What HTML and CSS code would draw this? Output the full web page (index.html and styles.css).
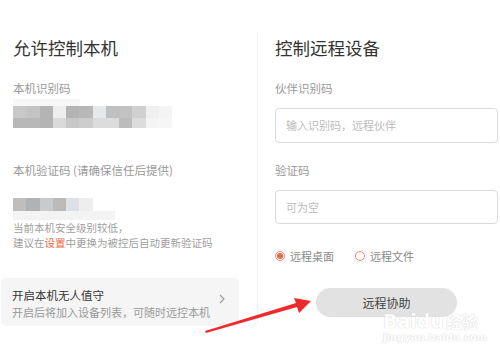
FILE: index.html
```html
<!DOCTYPE html>
<html lang="zh-CN">
<head>
  <meta charset="UTF-8" />
  <title>远程控制</title>
  <link rel="stylesheet" href="styles.css">
</head>
<body>
  <div class="page">
    <!-- 允许控制本机 -->
    <div class="col-left">
      <h1 class="title">允许控制本机</h1>
      <div class="label">本机识别码</div>
      <div class="blur blur-id">
        <div class="blur-top"></div>
        <div class="blur-row">
          <span style="background:#c8c8c8"></span><span style="background:#c4c4c4"></span><span style="background:#b4b4b4"></span><span style="background:#eeeeee"></span><span style="background:#b4b4b4"></span><span style="background:#b8b8b8"></span><span style="background:#e6e8ea"></span><span style="background:#c0c0c0"></span><span style="background:#c2c2c2"></span><span style="background:#d0d0d0"></span><span style="background:#f0f0f0"></span><span style="background:#f4f4f4"></span>
        </div>
        <div class="blur-row low">
          <span style="background:#b8b8b8"></span><span style="background:#b8b8b8"></span><span style="background:#b4b4b4"></span><span style="background:#dadada"></span><span style="background:#c8c8c8"></span><span style="background:#cccccc"></span><span style="background:#dcdcdc"></span><span style="background:#dcdcdc"></span><span style="background:#bcbcbc"></span><span style="background:#dcdcdc"></span><span style="background:#f4f4f4"></span><span style="background:#f6f6f6"></span>
        </div>
      </div>
      <div class="label label-code">本机验证码 (请确保信任后提供)</div>
      <div class="blur blur-code">
        <div class="blur-row">
          <span style="background:#c0bebc"></span><span style="background:#b0b2b4"></span><span style="background:#c8cacc"></span><span style="background:#bcbab8"></span><span style="background:#dde1e5"></span><span style="background:#eeeeee"></span>
        </div>
        <div class="blur-band"></div>
      </div>
      <p class="warn">当前本机安全级别较低，<br>建议在<span class="link">设置</span>中更换为被控后自动更新验证码</p>
      <div class="card">
        <div class="card-text">
          <div class="card-title">开启本机无人值守</div>
          <div class="card-sub">开启后将加入设备列表，可随时远控本机</div>
        </div>
        <svg class="chevron" width="6" height="10" viewBox="0 0 6 10"><polyline points="1,1 5,5 1,9" fill="none" stroke="#9a9a9a" stroke-width="1.1"/></svg>
      </div>
    </div>

    <!-- 控制远程设备 -->
    <div class="col-right">
      <h1 class="title">控制远程设备</h1>
      <div class="label">伙伴识别码</div>
      <div class="input input-id">输入识别码，远程伙伴</div>
      <div class="label label-pass">验证码</div>
      <div class="input input-code">可为空</div>
      <div class="radios">
        <label class="radio"><span class="dot checked"></span>远程桌面</label>
        <label class="radio"><span class="dot"></span>远程文件</label>
      </div>
      <button class="btn">远程协助</button>
    </div>
  </div>

  <!-- 标注箭头 -->
  <svg class="arrow" width="500" height="354" viewBox="0 0 500 354">
    <polygon points="205,331 296,303 294,298 311,301 299,313 297,307 206,333" fill="#f02a2a"/>
  </svg>

  <div class="watermark">
    <div class="wm-logo">Baidu<span class="wm-cn">经验</span></div>
    <div class="wm-url">jingyan.baidu.com</div>
  </div>
</body>
</html>
```

FILE: styles.css
```css
body {
  margin: 0;
  font-family: "Noto Sans CJK SC", "Noto Sans", sans-serif;
  background: #fff;
  color: #333;
  width: 500px;
  height: 354px;
  overflow: hidden;
  position: relative;
}
.page {
  display: flex;
  align-items: flex-start;
}
.col-left {
  width: 238px;
  margin-left: 1px;
  padding-top: 36px;
}
.col-left > .title,
.col-left > .label,
.col-left > .blur,
.col-left > .warn {
  margin-left: 12px;
}
.title {
  margin: 0;
  font-size: 17.5px;
  font-weight: 400;
  line-height: 24px;
  color: #333;
}
.label {
  margin-top: 20px;
  font-size: 11.5px;
  line-height: 16px;
  color: #999;
}
.label-code {
  margin-top: 34px;
}
.label-pass {
  margin-top: 19px;
}
.blur-id {
  margin-top: 3px;
}
.blur-top {
  width: 67px;
  height: 7px;
  background: #f7f7f7;
}
.blur-row {
  display: flex;
  height: 12px;
}
.blur-row.low {
  height: 10px;
}
.blur-row span {
  width: 13.25px;
  height: 100%;
}
.blur-code {
  margin-top: 20px;
}
.blur-code .blur-row {
  height: 13px;
}
.blur-band {
  width: 102px;
  height: 9px;
  background: #f3f3f3;
}
.warn {
  margin: 0;
  font-size: 10.5px;
  line-height: 15px;
  color: #a0a0a0;
}
.link {
  color: #f0643c;
}
.card {
  margin-top: 28px;
  height: 48px;
  box-sizing: border-box;
  padding: 8px 14px 6px 11px;
  background: #f5f5f5;
  border-radius: 5px;
  display: flex;
  align-items: center;
  justify-content: space-between;
}
.card-text {
  align-self: flex-start;
}
.card-title {
  font-size: 11.5px;
  line-height: 18px;
  color: #333;
}
.card-sub {
  font-size: 11px;
  line-height: 16px;
  color: #999;
}
.chevron {
  margin-bottom: 8px;
}
.col-right {
  margin-top: 35px;
  margin-left: 18px;
  padding: 1px 0 6px 17px;
  border-left: 1px solid #f2f2f2;
  width: 223px;
}
.input {
  margin-top: 12px;
  height: 35px;
  box-sizing: border-box;
  border: 1px solid #dcdcdc;
  border-radius: 4px;
  padding-left: 10px;
  font-size: 11px;
  line-height: 33px;
  color: #bbb;
}
.input-code {
  height: 34px;
  line-height: 32px;
}
.radios {
  margin-top: 24px;
  display: flex;
  gap: 21px;
  font-size: 11px;
  line-height: 16px;
  color: #888;
}
.radio {
  display: flex;
  align-items: center;
  gap: 5px;
}
.dot {
  width: 10px;
  height: 10px;
  box-sizing: border-box;
  border: 1px solid #f4896d;
  border-radius: 50%;
  display: flex;
  align-items: center;
  justify-content: center;
}
.dot.checked::after {
  content: "";
  width: 6px;
  height: 6px;
  border-radius: 50%;
  background: #f2673f;
}
.btn {
  display: block;
  margin: 24px 0 0 41px;
  width: 141px;
  height: 29px;
  border: none;
  border-radius: 15px;
  background: #e2e2e2;
  font-family: inherit;
  font-size: 12px;
  color: #444;
}
.arrow {
  position: absolute;
  left: 0;
  top: 0;
}
.watermark {
  position: absolute;
  left: 383px;
  top: 311px;
  color: #fff;
  text-shadow: 0 0 1px #d0d0d0, 0 0 1px #d0d0d0;
  opacity: 0.85;
}
.wm-logo {
  font-family: "DejaVu Sans", sans-serif;
  font-size: 19px;
  font-weight: bold;
  line-height: 21px;
}
.wm-cn {
  font-family: "Noto Sans CJK SC", sans-serif;
  font-size: 16px;
  margin-left: 2px;
}
.wm-url {
  font-family: "DejaVu Sans", sans-serif;
  font-size: 10px;
  font-weight: bold;
  line-height: 12px;
}
```
